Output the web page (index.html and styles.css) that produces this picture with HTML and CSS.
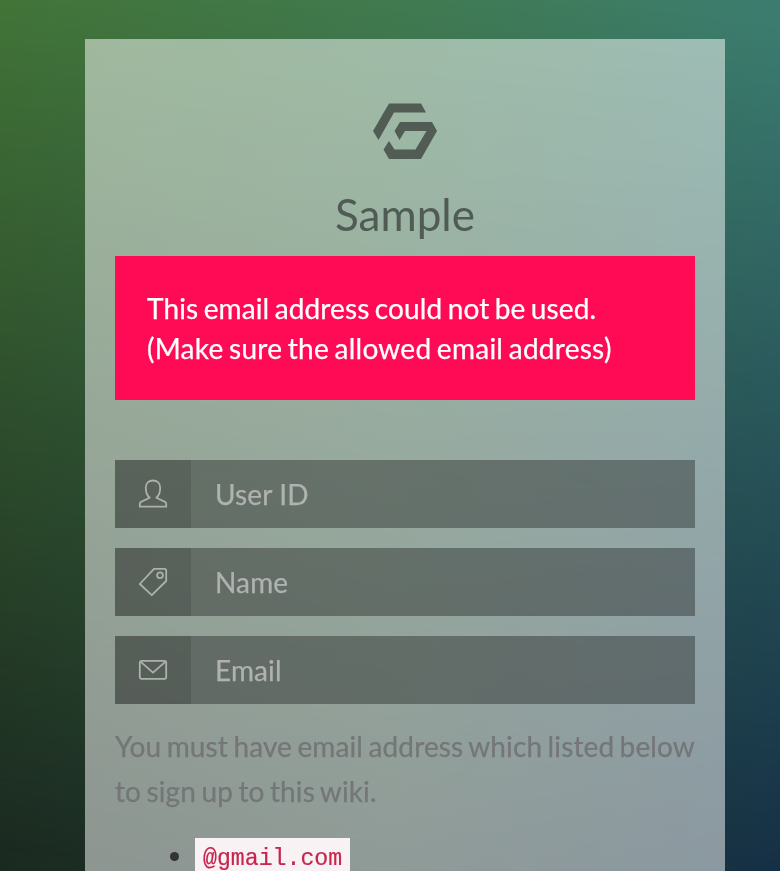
FILE: index.html
```html
<!DOCTYPE html>
<html lang="en">
<head>
<meta charset="utf-8">
<title>Sample</title>
<link rel="stylesheet" href="styles.css">
</head>
<body>
<main class="card">
  <header class="brand">
    <svg class="logo" viewBox="0 0 64 56" width="64" height="56">
      <path d="M16 0.500H48L53 9.500H21L5.500 37L0 28Z"/>
      <path d="M27 19H59L64 28L48 56H16L10.500 46.500L16 38L21.500 46.500H42.500L53.500 28H32L26.500 37L21.500 28Z"/>
    </svg>
    <h1 class="title">Sample</h1>
  </header>
  <div class="alert"><span class="tight">This email address could not be used.</span><br>(Make sure the allowed email address)</div>
  <form class="form">
    <label class="field">
      <span class="addon"><svg class="icon" viewBox="0 0 30 30"><path d="M11.700 18.800C8.700 16.400 7.800 13 7.800 8.700C7.800 4.300 10.900 1.500 15 1.500S22.200 4.300 22.200 8.700C22.200 13 21.300 16.400 18.300 18.800L27 22.900Q28.200 23.600 28.200 25V27.700H1.800V25Q1.800 23.600 3 22.900Z"/></svg></span>
      <input class="input" type="text" placeholder="User ID">
    </label>
    <label class="field">
      <span class="addon"><svg class="icon" viewBox="0 0 30 30"><path d="M16 1.800H26.500Q28.200 1.800 28.200 3.500V14L13.800 28.200L1.800 17Z"/><circle cx="22" cy="8.200" r="2.900"/></svg></span>
      <input class="input" type="text" placeholder="Name">
    </label>
    <label class="field">
      <span class="addon"><svg class="icon" viewBox="0 0 30 30"><rect x="1.800" y="5.800" width="26.400" height="18" rx="1.700"/><path d="M2.500 6.600L15 17.700L27.500 6.600"/></svg></span>
      <input class="input" type="email" placeholder="Email">
    </label>
    <p class="help">You must have email address which listed below<br>to sign up to this wiki.</p>
    <ul class="domains"><li><code>@gmail.com</code></li></ul>
  </form>
</main>
</body>
</html>
```
FILE: styles.css
```css
* { box-sizing: border-box; }
html { height: 100%; overflow: hidden; }
body {
  height: 100%;
  margin: 0;
  padding: 39px 55px 0 85px;
  overflow: hidden;
  font-family: Lato, sans-serif;
  font-size: 28px;
  background: linear-gradient(90deg, #1b2a21 0%, #1f352e 50%, #132b43 100%);
  isolation: isolate;
}
body::before {
  content: "";
  position: fixed;
  inset: 0;
  z-index: -1;
  background: linear-gradient(90deg, #457a3a 0%, #427c50 50%, #3c7c70 100%);
  mask-image: linear-gradient(186deg, #000 2%, rgba(0, 0, 0, .47) 50%, transparent 98%);
}
.card {
  height: 100%;
  padding: 64px 30px 0;
  background: rgba(255, 255, 255, .5);
}
.brand { text-align: center; }
.logo { display: block; margin: 0 auto; fill: #505c54; }
.title {
  margin: 25px 0 0;
  font-size: 44px;
  line-height: 60px;
  font-weight: 400;
  color: #4f5b54;
}
.alert {
  height: 144px;
  margin: 12px 0 60px;
  padding: 32px;
  line-height: 40px;
  letter-spacing: .26px;
  word-spacing: -1.9px;
  color: #fff;
  -webkit-text-stroke: .25px;
  background: #ff0a54;
}
.tight { letter-spacing: .12px; }
.field { display: flex; height: 68px; margin-bottom: 20px; background: rgba(0, 0, 0, .33); }
.addon {
  display: flex;
  align-items: center;
  justify-content: center;
  width: 76px;
  background: rgba(0, 0, 0, .11);
}
.icon { width: 30px; height: 30px; fill: none; stroke: #aeb0ae; stroke-width: 1.8; stroke-linejoin: round; }
.input {
  flex: 1;
  min-width: 0;
  padding: 0 24px;
  border: 0;
  background: none;
  font: inherit;
  letter-spacing: .13px;
  color: #b0b2b1;
  -webkit-text-stroke: .25px;
}
.input::placeholder { color: #b0b2b1; opacity: 1; }
.help {
  margin: 0;
  line-height: 45px;
  letter-spacing: .13px;
  word-spacing: -1.9px;
  white-space: nowrap;
  color: #747678;
  -webkit-text-stroke: .25px;
}
.domains { margin: 18px 0 0; padding-left: 80px; line-height: 44px; color: #333; }
code {
  padding: 8px 8px 4px;
  font-family: Consolas, "Liberation Mono", monospace;
  font-size: 23.2px;
  color: #c7254e;
  -webkit-text-stroke: .2px #c7254e;
  background: #f9f2f4;
}
```
